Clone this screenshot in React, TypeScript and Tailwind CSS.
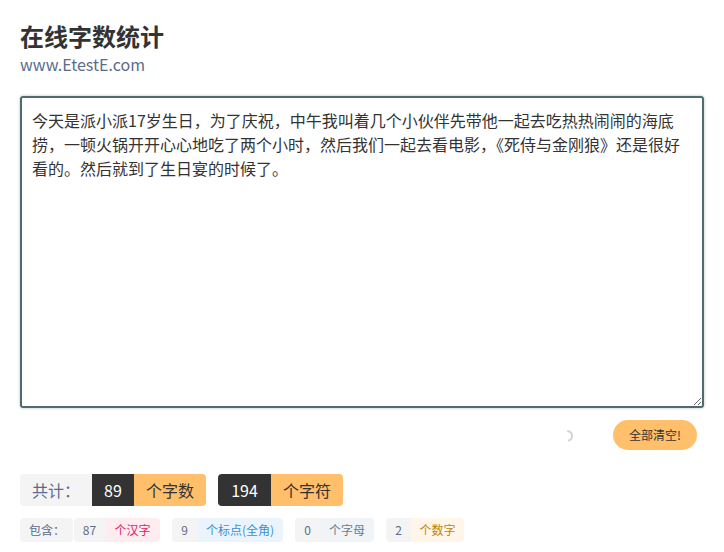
import React, { useState } from 'react';

const FONT = { fontFamily: '"Noto Sans CJK SC", "Noto Sans", sans-serif' };

const INITIAL =
  '今天是派小派17岁生日，为了庆祝，中午我叫着几个小伙伴先带他一起去吃热热闹闹的海底捞，一顿火锅开开心心地吃了两个小时，然后我们一起去看电影，《死侍与金刚狼》还是很好看的。然后就到了生日宴的时候了。';

const App: React.FC = () => {
  const [text, setText] = useState(INITIAL);

  const han = (text.match(/[\u4e00-\u9fa5]/g) || []).length;
  const punct = (text.match(/[，。、《》！？：；“”‘’（）]/g) || []).length;
  const letters = (text.match(/[a-zA-Z]/g) || []).length;
  const digits = (text.match(/[0-9]/g) || []).length;
  const words = han + digits;
  // 全角字符按 2 个字符计
  const chars = Array.from(text).reduce((n, c) => n + (c.charCodeAt(0) > 255 ? 2 : 1), 0);

  return (
    <div className="min-h-screen bg-white px-5 pt-[18px] text-[#333]" style={FONT}>
      <h1 className="text-[24px] font-bold leading-9 text-[#333]">在线字数统计</h1>
      <p className="text-[16px] leading-5 text-[#5b6b8c]">www.EtestE.com</p>

      <textarea
        value={text}
        onChange={(e) => setText(e.target.value)}
        className="mt-[22px] block h-[312px] w-full rounded-[3px] border-2 border-[#4f6b70] px-[10px] py-[10px] text-[16px] leading-6 text-[#333] shadow-[0_0_3px_rgba(79,107,112,0.45)] outline-none"
        style={FONT}
      />

      <div className="mt-3 flex items-center justify-end gap-[38px] pr-[7px]">
        <svg width="14" height="14" viewBox="0 0 14 14" className="mt-[2px]">
          <path d="M7 2 A5 5 0 0 1 8 11.5" fill="none" stroke="#d4d4d4" strokeWidth="2" strokeLinecap="round" />
        </svg>
        <button
          onClick={() => setText('')}
          className="h-[30px] rounded-full bg-[#ffbf6b] px-[16px] text-[12px] text-[#333]"
        >
          全部清空!
        </button>
      </div>

      <div className="mt-[24px] flex items-center gap-3 text-[16px]">
        <div className="flex h-[32px] overflow-hidden rounded">
          <span className="flex w-[72px] items-center bg-[#f4f4f5] pl-3 text-[#5b6b8c]">共计：</span>
          <span className="flex w-[42px] items-center justify-center bg-[#333] text-white">{words}</span>
          <span className="flex w-[72px] items-center justify-center bg-[#ffbf6b] text-[#333]">个字数</span>
        </div>
        <div className="flex h-[32px] overflow-hidden rounded">
          <span className="flex w-[53px] items-center justify-center bg-[#333] text-white">{chars}</span>
          <span className="flex w-[72px] items-center justify-center bg-[#ffbf6b] text-[#333]">个字符</span>
        </div>
      </div>

      <div className="mt-3 flex items-center gap-3 text-[12px]">
        <div className="flex h-[24px] gap-px">
          <span className="flex w-[53px] items-center rounded bg-[#f4f4f5] pl-[9px] text-[#5b6b8c]">包含：</span>
          <div className="flex overflow-hidden rounded">
            <span className="flex w-[31px] items-center justify-center bg-[#f4f4f5] text-[#5b6b8c]">{han}</span>
            <span className="flex w-[55px] items-center justify-center bg-[#ffecf0] text-[#e0245e]">个汉字</span>
          </div>
        </div>
        <div className="flex h-[24px] overflow-hidden rounded">
          <span className="flex w-[25px] items-center justify-center bg-[#f4f4f5] text-[#5b6b8c]">{punct}</span>
          <span className="flex w-[86px] items-center justify-center bg-[#ebf4fc] text-[#3a8fd6]">个标点(全角)</span>
        </div>
        <div className="flex h-[24px] overflow-hidden rounded">
          <span className="flex w-[25px] items-center justify-center bg-[#f4f4f5] text-[#5b6b8c]">{letters}</span>
          <span className="flex w-[54px] items-center justify-center bg-[#f0f4f6] text-[#6b7b8a]">个字母</span>
        </div>
        <div className="flex h-[24px] overflow-hidden rounded">
          <span className="flex w-[25px] items-center justify-center bg-[#f4f4f5] text-[#5b6b8c]">{digits}</span>
          <span className="flex w-[53px] items-center justify-center bg-[#fff5e8] text-[#b8860b]">个数字</span>
        </div>
      </div>
    </div>
  );
};

export default App;
